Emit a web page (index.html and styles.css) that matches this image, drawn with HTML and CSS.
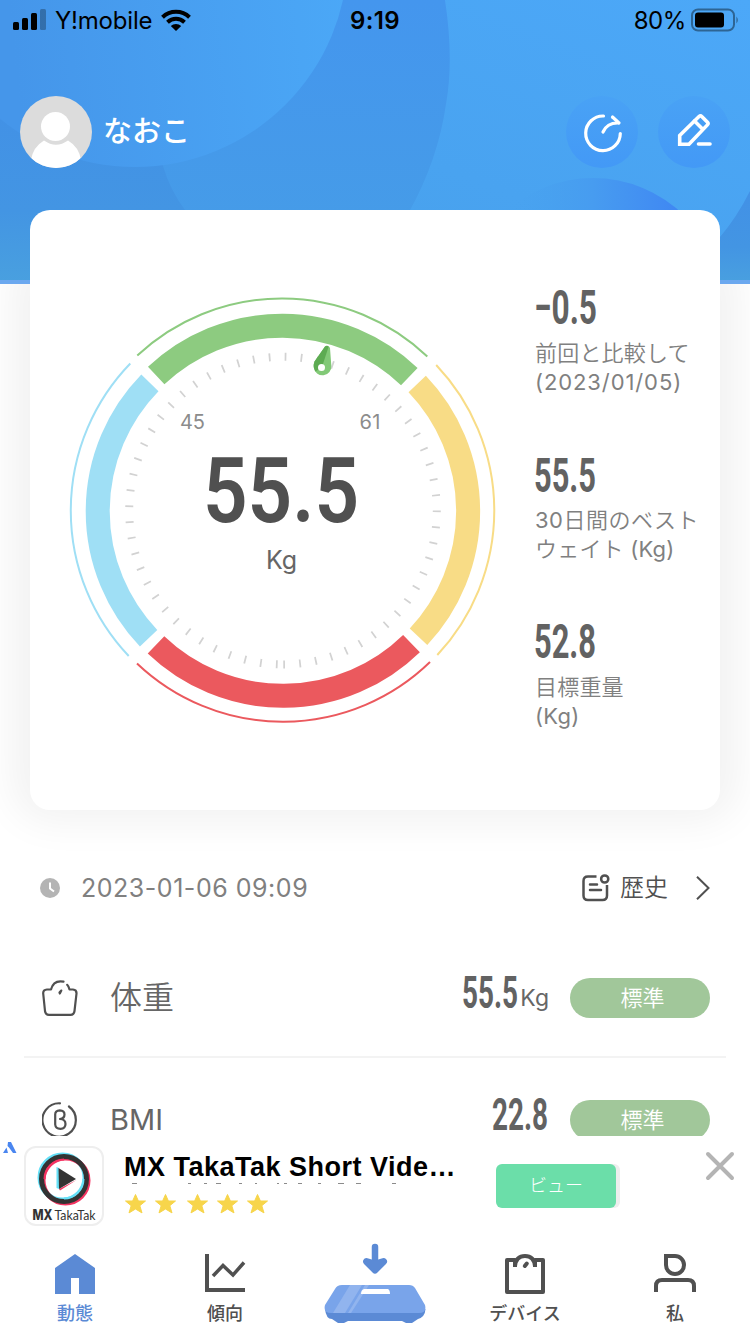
FILE: index.html
```html
<!DOCTYPE html>
<html lang="ja">
<head>
<meta charset="utf-8">
<title>体重</title>
<link rel="stylesheet" href="styles.css">
</head>
<body>
<div class="screen">
  <div class="scroll">
    <header class="hero">
      <svg class="hero-bg" width="750" height="284" viewBox="0 0 750 284">
        <defs>
          <linearGradient id="gBase" x1="0" y1="1" x2="1" y2="0"><stop offset="0" stop-color="#469ee6"/><stop offset=".5" stop-color="#49a3f0"/><stop offset="1" stop-color="#4ca8f8"/></linearGradient>
          <linearGradient id="gMid" x1="0" y1="0" x2="0" y2="1"><stop offset="0" stop-color="#4496ee"/><stop offset="1" stop-color="#469de6"/></linearGradient>
          <linearGradient id="gDark" x1="0" y1="0" x2="0" y2="1"><stop offset="0" stop-color="#4291e6"/><stop offset=".6" stop-color="#4395e3"/><stop offset="1" stop-color="#49a0df"/></linearGradient>
          <linearGradient id="gLeft" x1="0" y1=".6" x2="1" y2=".5"><stop offset=".2" stop-color="#4596ea"/><stop offset="1" stop-color="#4ba8f7"/></linearGradient>
          <linearGradient id="gBall" x1="0" y1="0" x2="1" y2="0"><stop offset=".2" stop-color="#47a0ee" stop-opacity="0"/><stop offset=".5" stop-color="#479cf0"/><stop offset=".85" stop-color="#3f86f3"/></linearGradient>
        </defs>
        <rect width="750" height="284" fill="url(#gBase)"/>
        <path d="M0 0H445Q454 60 446 104Q438 160 409 212L360 284H0Z" fill="url(#gMid)"/>
        <path d="M0 100H150L163 166Q170 190 185 210Q205 250 230 284H0Z" fill="url(#gDark)"/>
        <circle cx="135" cy="-46" r="213" fill="url(#gLeft)"/>
        <circle cx="593" cy="308" r="130" fill="url(#gBall)"/>
        <path d="M750 191Q737 217 720 237L690 284H750Z" fill="url(#gDark)"/>
        <rect y="280" width="750" height="4" fill="#6ba8ef"/>
      </svg>
      <div class="status">
        <div class="status-left">
          <svg width="34" height="22" viewBox="0 0 34 22"><rect x="1" y="13" width="6" height="8" rx="1.5"/><rect x="10" y="9" width="6" height="12" rx="1.5"/><rect x="19" y="4" width="6" height="17" rx="1.5"/><rect x="28" y="0" width="6" height="21" rx="1.5" opacity=".27"/></svg>
          <span class="carrier">Y!mobile</span>
          <svg width="30" height="22" viewBox="0 0 30 22" fill="none" stroke="#000" stroke-width="4"><path d="M1.500 8.200A19.500 19.500 0 0 1 28.500 8.200"/><path d="M6.500 13.200A12.500 12.500 0 0 1 23.500 13.200"/><path d="M15 22L9.800 17A7.500 7.500 0 0 1 20.200 17Z" fill="#000" stroke="none"/></svg>
        </div>
        <span class="clock">9:19</span>
        <div class="status-right">
          <span class="battery-text">80%</span>
          <svg width="48" height="24" viewBox="0 0 48 24"><rect x="1" y="1.500" width="42" height="21" rx="6" fill="none" stroke="#000" stroke-opacity=".4" stroke-width="2"/><rect x="4" y="4.500" width="29" height="15" rx="3"/><path d="M45.500 8.500Q48 12 45.500 15.500Z" opacity=".45"/></svg>
        </div>
      </div>
      <div class="profile">
        <svg class="avatar" width="72" height="72" viewBox="0 0 72 72"><defs><clipPath id="av"><circle cx="36" cy="36" r="36"/></clipPath></defs><g clip-path="url(#av)"><rect width="72" height="72" fill="#dcdcdc"/><path d="M11 64Q13 51 24 44.500Q36 53 48 44.500Q59 51 61 64V72H11Z" fill="#fff"/><circle cx="35.500" cy="30.500" r="14.500" fill="#fff"/></g></svg>
        <span class="name">なおこ</span>
        <div class="round"><svg width="72" height="72" viewBox="0 0 72 72"><g fill="none" stroke="#fff" stroke-width="3.200" stroke-linecap="round" stroke-linejoin="round"><path d="M37.500 20A17.300 17.300 0 1 0 54.300 37.500"/><path d="M37 36Q41 27 51.500 27"/><path d="M46.500 21L53 27"/></g></svg></div>
        <div class="round"><svg width="72" height="72" viewBox="0 0 72 72"><g fill="none" stroke="#fff" stroke-width="3.600" stroke-linecap="round" stroke-linejoin="round"><path d="M21.700 48.200V39.500L41 20.500Q42.500 19.200 44 20.700L49.500 26.200Q50.700 27.500 49.400 28.900L31 48.200Z" stroke-linejoin="miter"/><path d="M36.500 25L44.500 33"/><path d="M40.500 48H52"/></g></svg></div>
      </div>
    </header>

    <section class="card">
      <svg class="gauge" width="446" height="446" viewBox="60 288 446 446">
        <g fill="none" stroke-width="24">
          <path stroke="#8dcb80" d="M156.200 375.600A184 184 0 0 1 409.300 376.600"/>
          <path stroke="#f8dc86" d="M417.200 384A184 184 0 0 1 418.500 636.800"/>
          <path stroke="#eb595e" d="M411.500 643.600A184 184 0 0 1 156 644.900"/>
          <path stroke="#9fdff5" d="M148.600 638.200A184 184 0 0 1 149.900 382.800"/>
        </g>
        <g fill="none" stroke-width="2">
          <path stroke="#8dcb80" d="M137.300 355.500A211.500 211.500 0 0 1 427.300 356.500"/>
          <path stroke="#f8dc86" d="M436.200 365A211.500 211.500 0 0 1 437.300 655"/>
          <path stroke="#eb595e" d="M430 662A211.500 211.500 0 0 1 137 663.500"/>
          <path stroke="#9fdff5" d="M128.700 656A211.500 211.500 0 0 1 130.300 363.500"/>
        </g>
        <circle r="153.800" fill="none" stroke="#d2d2d2" stroke-width="8" pathLength="360" stroke-dasharray=".65 5.304" transform="translate(283 510.600) rotate(89.900) scale(1 -1)"/>
        <path d="M325 346.500Q328.500 344.500 330 348L331.300 365.500A8.600 8.600 0 0 1 313.800 367.500Q313 365 314.500 361.500Z" fill="#82c977"/>
        <path d="M325 346.500Q327 345 328.500 347L322 367L315.500 371.500Q312.500 367 314.500 361.500Z" fill="#5dab52"/>
        <circle cx="321.500" cy="367.500" r="3.500" fill="#fff"/>
        <text class="scale" x="180" y="428.500" textLength="25">45</text>
        <text class="scale" x="359.500" y="428.500" textLength="21">61</text>
        <text class="big" x="203" y="521.500" textLength="156" lengthAdjust="spacingAndGlyphs">55.5</text>
        <text class="unit" x="266" y="569.300" textLength="31">Kg</text>
      </svg>
      <div class="stats">
        <div class="stat">
          <svg class="num" width="64" height="40"><text x="-1" y="37" textLength="63" lengthAdjust="spacingAndGlyphs">−0.5</text></svg>
          <p class="jp">前回と比較して</p><p class="date">(2023/01/05)</p>
        </div>
        <div class="stat">
          <svg class="num" width="64" height="40"><text x="-1" y="38" textLength="62" lengthAdjust="spacingAndGlyphs">55.5</text></svg>
          <p class="jp best"><span>30</span>日間のベスト</p><p class="jp">ウェイト <span>(Kg)</span></p>
        </div>
        <div class="stat">
          <svg class="num" width="64" height="40"><text x="-1" y="37" textLength="62" lengthAdjust="spacingAndGlyphs">52.8</text></svg>
          <p class="jp">目標重量</p><p class="kg">(Kg)</p>
        </div>
      </div>
    </section>

    <section class="record">
      <div class="record-head">
        <svg width="20" height="20" viewBox="0 0 20 20"><circle cx="10" cy="10" r="10" fill="#b4b4b4"/><path d="M10 4.500V10.500L14 13.500" fill="none" stroke="#fff" stroke-width="2"/></svg>
        <time>2023-01-06 09:09</time>
        <svg class="note" width="28" height="28" viewBox="0 0 28 28" fill="none" stroke="#505050" stroke-width="2.500"><path d="M14.500 2.500H6Q1.500 2.500 1.500 7V21.500Q1.500 26 6 26H20.500Q25 26 25 21.500V11"/><circle cx="22.700" cy="5" r="3.600"/><path d="M8 10.500H15M8 16H19" stroke-linecap="round"/></svg>
        <span class="history">歴史</span>
        <svg width="14" height="24" viewBox="0 0 14 24"><path d="M1 .8L12.500 12L1 23.200" fill="none" stroke="#505050" stroke-width="2"/></svg>
      </div>
      <div class="row">
        <svg width="36" height="36" viewBox="0 0 36 36" fill="none" stroke="#505050" stroke-width="2.200" stroke-linecap="round" stroke-linejoin="round"><path d="M21.500 1.600Q11.500 -.3 9 9.500H5Q1 9.800 1.200 13.500L3 31Q3.500 34.800 7 34.800H28.500Q32 34.800 32.500 31L34.500 13.500Q34.700 9.800 31 9.500H27.500Q26.500 6 25.200 4.800"/><path d="M19.300 10.500L17.500 12.500L17.800 13.500Z"/></svg>
        <span class="label">体重</span>
        <svg class="num small" width="57" height="40"><text x="0" y="37" textLength="56" lengthAdjust="spacingAndGlyphs">55.5</text></svg>
        <span class="row-unit">Kg</span>
        <span class="pill">標準</span>
      </div>
      <div class="row second">
        <svg width="36" height="36" viewBox="0 0 36 36" fill="none" stroke="#505050" stroke-width="2.200" stroke-linecap="round" stroke-linejoin="round"><path d="M18 1.300A16.700 16.700 0 1 0 27 4.500"/><path d="M18 17Q22.500 16.500 22.500 12.500Q22.500 8.500 17.800 8.300Q13.200 8.500 13.200 12.500V22.500Q13.500 26.800 18.500 26.800Q23.500 26.500 23.500 22Q23.500 17.200 18 17" stroke-width="2.200"/></svg>
        <span class="label bmi">BMI</span>
        <svg class="num small" width="57" height="40"><text x="0" y="36.300" textLength="56" lengthAdjust="spacingAndGlyphs">22.8</text></svg>
        <span class="pill">標準</span>
      </div>
    </section>
  </div>

  <aside class="ad">
    <svg class="ad-mark" width="14" height="12" viewBox="0 0 14 12"><path d="M0 11L3.500 5.500L5 11ZM5 0H8L13.500 11H10L6 5.500L4.500 4Z" fill="#4a86f0"/></svg>
    <div class="app-icon">
      <svg width="76" height="76" viewBox="0 0 76 76"><g fill="none"><circle cx="36.500" cy="29.500" r="22.500" stroke="#66e0f7" stroke-width="5"/><circle cx="39.500" cy="32.500" r="22.500" stroke="#f43361" stroke-width="5"/><circle cx="38" cy="31" r="22.500" stroke="#333" stroke-width="5"/><path d="M18.500 31A19.500 19.500 0 0 1 38 11.500" stroke="#f43361" stroke-width="2"/><path d="M38 50.500A19.500 19.500 0 0 0 57.500 31" stroke="#66e0f7" stroke-width="2"/></g><path d="M30.500 19V40L33 41V20Z" fill="#66e0f7"/><path d="M33 41L50.500 32L34 42.500Z" fill="#f43361"/><path d="M32.500 20L50 31L33 41Z" fill="#333"/><text x="6.500" y="72" class="mx" textLength="20" lengthAdjust="spacingAndGlyphs">MX</text><text x="28.500" y="72" class="taka" textLength="41" lengthAdjust="spacingAndGlyphs">TakaTak</text></svg>
    </div>
    <div class="ad-copy">
      <strong>MX TakaTak Short Vide…</strong>
      <svg width="300" height="2" viewBox="0 0 300 2"><path d="M8 .5H13M64 .5H67M80 .5H83M92 .5H97M115 .5H118M131 .5H133M153 .5H155M160 .5H163M174 .5H178M194 .5H197M214 .5H220M232 .5H237M268 .5H272" stroke="#8b8b8b"/></svg>
      <svg class="stars" width="146" height="22" viewBox="0 0 146 22" fill="#f7d54b" stroke="#f7d54b" stroke-linejoin="round"><defs><path id="st" d="M11.500 1.500L14.400 8H21.500L15.800 12.700L18 19.900L11.500 16L5 19.900L7.200 12.700L1.500 8H8.600Z"/></defs><use href="#st"/><use href="#st" x="30"/><use href="#st" x="62"/><use href="#st" x="92"/><use href="#st" x="122"/></svg>
    </div>
    <span class="cta">ビュー</span>
    <svg class="close" width="30" height="30" viewBox="0 0 30 30"><path d="M3 3L27 27M27 3L3 27" stroke="#b4b4b4" stroke-width="4" stroke-linecap="round"/></svg>
  </aside>

  <nav class="tabs">
    <a class="tab active"><svg width="42" height="42" viewBox="0 0 42 42"><path d="M21 0L41 14V40H25V24H17V40H1V14Z" fill="#5b8ad5"/></svg><span>動態</span></a>
    <a class="tab"><svg width="42" height="42" viewBox="0 0 42 42" fill="none" stroke="#505050" stroke-width="4"><path d="M3 0V36H41"/><path d="M9 22L19 11.500L29 21L40 8.500" stroke-width="3.500"/></svg><span>傾向</span></a>
    <a class="tab measure"><svg width="102" height="82" viewBox="0 0 102 82"><path d="M51 4V24" fill="none" stroke="#5b8ad5" stroke-width="6.500" stroke-linecap="round"/><path d="M42.500 18.500L51 27L59.500 18.500L51 21Z" fill="#5b8ad5" stroke="#5b8ad5" stroke-width="7" stroke-linejoin="round"/><path d="M1 66Q2 76 8 76L14 80H20L24 78H78L82 80H88L94 76Q101 74 101.500 66Z" fill="#5b8ad5"/><path d="M18 42H85Q89 42 91 45L101 62Q103 70 95 70H7Q-1 70 1 62L11 46Q13 42 18 42Z" fill="#79a4ea"/><path d="M26 42H38L21 70H9ZM41 42H45L27 70H24Z" fill="#91b4ee"/><path d="M40 46H64Q66 47 66 51H37Q37 47 40 46Z" fill="#fff"/></svg></a>
    <a class="tab"><svg width="42" height="42" viewBox="0 0 42 42" fill="none" stroke="#505050" stroke-width="4" stroke-linejoin="round"><path d="M11 13V6H3V38H39V6H31V13"/><path d="M11 12Q12 2 21 2Q30 2 31 12"/><path d="M20.800 12L22.800 9.500" stroke-linecap="round"/></svg><span>デバイス</span></a>
    <a class="tab"><svg width="42" height="42" viewBox="0 0 42 42" fill="none" stroke="#505050" stroke-width="4"><path d="M12 2H21A9 9 0 1 1 12 11Z"/><path d="M2 38V32Q2 26 8 26H34Q40 26 40 32V38"/></svg><span>私</span></a>
  </nav>
</div>
</body>
</html>
```

FILE: styles.css
```css
* { box-sizing: border-box; }
body { margin: 0; font-family: Inter, "Noto Sans CJK JP", sans-serif; color: #666; background: #fff; }
p { margin: 0; }
svg { display: block; flex: none; }
.screen { width: 750px; height: 1334px; overflow: hidden; display: flex; flex-direction: column; background: #fff; }
.scroll { height: 1136px; flex: none; overflow: hidden; }

.hero { position: relative; height: 284px; }
.hero-bg { position: absolute; left: 0; top: 0; }
.status { position: relative; display: grid; grid-template-columns: 1fr auto 1fr; align-items: center; height: 40px; padding: 0 11px 0 12px; color: #000; }
.status-left, .status-right { display: flex; align-items: center; }
.status-left { gap: 9px; }
.status-right { justify-content: flex-end; gap: 5px; }
.carrier { font-size: 24px; letter-spacing: -.2px; }
.clock { font-size: 24px; font-weight: 600; letter-spacing: .4px; padding-right: 1px; }
.battery-text { font-size: 24px; letter-spacing: -.4px; }
.profile { position: relative; display: flex; align-items: center; height: 72px; margin: 56px 20px 0; }
.name { flex: 1; margin-left: 11px; color: #fff; font-size: 29px; font-weight: 500; line-height: 40px; }
.round { width: 72px; height: 72px; border-radius: 50%; background: linear-gradient(180deg, #49a2f5, #4399f6); margin-left: 20px; }

.card { position: relative; z-index: 0; display: flex; width: 690px; height: 600px; margin: -74px auto 0; padding-left: 30px; background: #fff; border-radius: 20px; }
/* The shadow starts below the coloured header */
.card::before { content: ""; position: absolute; z-index: -1; inset: 74px 0 0; border-radius: 0 0 20px 20px; box-shadow: 0 -6px 40px 18px rgba(0, 0, 0, .055); clip-path: inset(0 -30px -50px); }
.gauge { margin-top: 78px; }
.scale { font-size: 20px; fill: #8c8c8c; }
.big { font-family: Roboto, sans-serif; font-weight: 600; font-size: 91px; fill: #505050; }
.unit { font-size: 25px; fill: #666; }
.stats { padding: 77px 0 0 29px; }
.stat { height: 167px; color: #808080; font-size: 22px; line-height: 29px; white-space: nowrap; }
.num { overflow: visible; }
.num text { font-family: Roboto, sans-serif; font-weight: 700; font-size: 48px; fill: #626262; }
.num.small text { font-size: 44px; }
.stat .num { margin-bottom: 12px; }
.stat .jp { font-weight: 350; letter-spacing: .2px; }
.date { letter-spacing: .9px; }
.stat span { font-weight: 400; }
.stat .best { letter-spacing: .5px; }
.kg { letter-spacing: .3px; }

.record-head { display: flex; align-items: center; height: 56px; margin: 50px 40px 0; }
.record-head time { flex: 1; margin-left: 21px; font-size: 25px; color: #808080; letter-spacing: .53px; }
.history { margin: 0 28px 0 10px; font-size: 24px; font-weight: 350; color: #505050; line-height: 36px; }
.row { display: flex; align-items: center; height: 121px; margin: 21px 24px 0; padding: 2px 16px 0 18px; border-bottom: 2px solid #f3f3f3; }
.row.second { margin-top: 0; height: 124px; }
.label { flex: 1; margin-left: 32px; font-size: 32px; font-weight: 350; line-height: 44px; }
.bmi { font-size: 29px; font-weight: 400; }
.num.small { margin-top: -13px; }
.row-unit { font-size: 23px; margin-left: 1px; }
.pill { width: 140px; height: 40px; margin-left: 21px; padding-left: 5px; border-radius: 20px; background: #a1c79a; color: #fff; text-align: center; font-size: 22px; font-weight: 350; line-height: 40px; }

.ad { flex: none; display: flex; align-items: flex-start; height: 98px; background: #fff; }
.ad-mark { margin: 6px 7px 0 3px; }
.app-icon { width: 80px; height: 80px; margin-top: 10px; border: 2px solid #eee; border-radius: 12px; }
.mx { font: 800 14px Inter, sans-serif; fill: #333; }
.taka { font: 400 14px Lato, sans-serif; fill: #333; }
.ad-copy { width: 392px; padding: 16px 0 0 20px; }
.ad-copy strong { display: block; font: bold 27px/30px "Liberation Sans", Arial, sans-serif; letter-spacing: .5px; color: #000; white-space: nowrap; }
.ad-copy svg { margin-top: 1px; }
.ad-copy .stars { margin-top: 8px; }
.cta { width: 120px; height: 44px; margin-top: 28px; border-radius: 6px; background: #6bdea9; color: #fff; text-align: center; font-size: 18px; font-weight: 300; line-height: 44px; box-shadow: 4px 0 0 #eee; }
.close { margin: 15px 0 0 89px; }

.tabs { flex: 1; display: grid; grid-template-columns: repeat(5, 150px); background: #fff; }
.tab { display: flex; flex-direction: column; align-items: center; padding-top: 20px; color: #505050; font: 500 18px/26px "Noto Sans CJK JP", sans-serif; }
.tab span { margin-top: 3px; }
.tab.active { color: #5b8ad5; }
.tab.measure { padding-top: 9px; }
```
